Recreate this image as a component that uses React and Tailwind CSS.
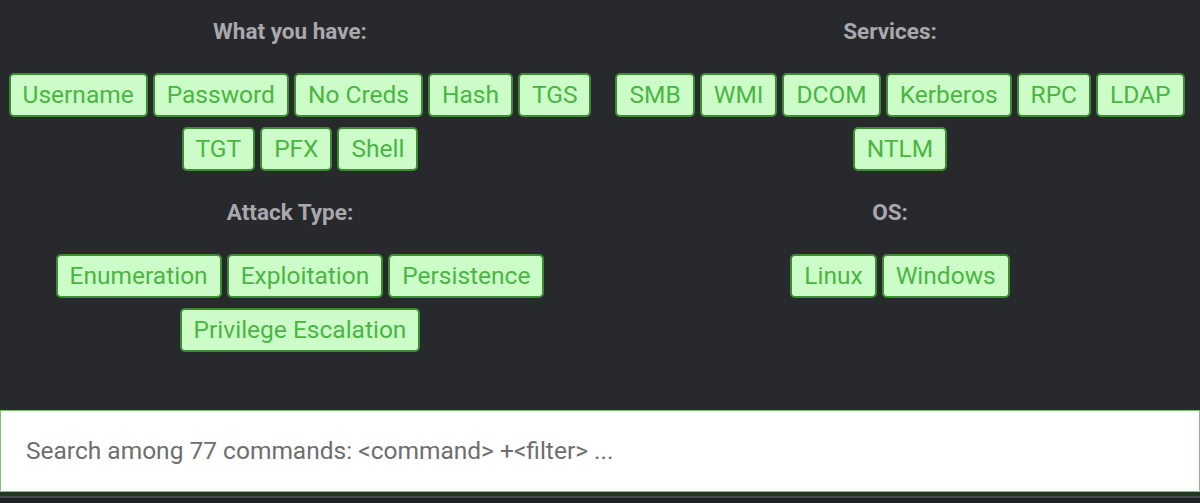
import React from "react";

const groups = [
  { title: "What you have:", items: [["Username", "Password", "No Creds", "Hash", "TGS"], ["TGT", "PFX", "Shell"]] },
  { title: "Services:", items: [["SMB", "WMI", "DCOM", "Kerberos", "RPC", "LDAP"], ["NTLM"]] },
  { title: "Attack Type:", items: [["Enumeration", "Exploitation", "Persistence"], ["Privilege Escalation"]] },
  { title: "OS:", items: [["Linux", "Windows"]] },
];

function Tag({ label }) {
  return (
    <button className="h-[44px] px-[12px] rounded-[5px] border-2 border-[#3a8d31] bg-[#ccfdc8] text-[#4bb543] text-[24.5px] leading-[28px] font-['Roboto',sans-serif]">
      {label}
    </button>
  );
}

function Section({ title, items }) {
  return (
    <div className="flex flex-col items-center">
      <div className="h-[24px] leading-[24px] text-[22.5px] font-bold text-[#a8a8ad] font-['Roboto',sans-serif] mr-[20px]">
        {title}
      </div>
      <div className="mt-[30px] flex flex-col items-center gap-y-[10px]">
        {items.map((row, i) => (
          <div key={i} className="flex gap-x-[5px]">
            {row.map((t) => (
              <Tag key={t} label={t} />
            ))}
          </div>
        ))}
      </div>
    </div>
  );
}

export default function App() {
  return (
    <div className="w-full h-[503px] bg-[#28292d] flex flex-col font-['Roboto',sans-serif]">
      <div className="grid grid-cols-2 gap-y-[29px] pt-[19px] items-start">
        {groups.map((g) => (
          <Section key={g.title} title={g.title} items={g.items} />
        ))}
      </div>
      <div className="flex-1" />
      <div className="h-[82px] bg-white border border-[#7fc070] flex items-center pl-[25px]">
        <span className="text-[24.5px] text-[#6e6e6e]">Search among 77 commands: &lt;command&gt; +&lt;filter&gt; ...</span>
      </div>
      <div className="h-[4px] bg-[#1d3a1c]" />
      <div className="h-[2px] bg-[#48494c]" />
      <div className="h-[5px] bg-[#1f2023]" />
    </div>
  );
}
